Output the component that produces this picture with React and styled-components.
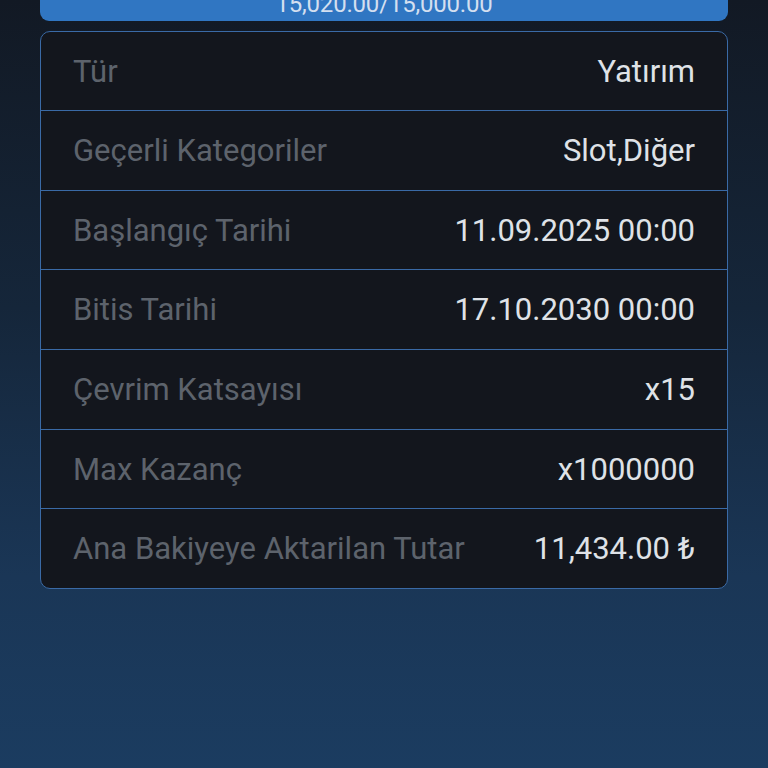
import React from "react";
import styled, { createGlobalStyle } from "styled-components";

const Global = createGlobalStyle`
  html, body { margin: 0; padding: 0; }
  body {
    width: 768px;
    height: 768px;
    overflow: hidden;
    font-family: Roboto, "Noto Sans", sans-serif;
    background: linear-gradient(180deg, #121924 0%, #15263a 40%, #1a3656 75%, #1b3c60 100%);
  }
`;

const Page = styled.div`
  width: 768px;
  height: 768px;
  box-sizing: border-box;
  padding: 0 40px;
  display: flex;
  flex-direction: column;
  gap: 10px;
`;

const Progress = styled.div`
  margin-top: -20px;
  height: 41px;
  border-radius: 0 0 9px 9px;
  background: #3076c2;
  color: #d3dff0;
  font-size: 24px;
  display: flex;
  align-items: flex-end;
  justify-content: center;
  line-height: 1;
  padding-bottom: 5px;
  box-sizing: border-box;
  letter-spacing: -0.2px;
`;

const Card = styled.div`
  border: 1px solid #3a6aa6;
  border-radius: 10px;
  background: #13161d;
  overflow: hidden;
`;

const Row = styled.div`
  height: ${(p) => (p.$first ? "78px" : "79.7px")};
  box-sizing: border-box;
  display: flex;
  align-items: center;
  justify-content: space-between;
  padding: 0 32px 0 32px;
  border-top: ${(p) => (p.$first ? "none" : "1px solid #3a6aa6")};
  font-size: 31px;
  line-height: 1;
`;

const Label = styled.span`
  color: #5d636c;
`;

const Value = styled.span`
  color: #dfe2e7;
`;

const rows = [
  ["Tür", "Yatırım"],
  ["Geçerli Kategoriler", "Slot,Diğer"],
  ["Başlangıç Tarihi", "11.09.2025 00:00"],
  ["Bitis Tarihi", "17.10.2030 00:00"],
  ["Çevrim Katsayısı", "x15"],
  ["Max Kazanç", "x1000000"],
  ["Ana Bakiyeye Aktarilan Tutar", "11,434.00 ₺"],
];

export default function App() {
  return (
    <>
      <Global />
      <Page>
        <Progress>15,020.00/15,000.00</Progress>
        <Card>
          {rows.map(([l, v], i) => (
            <Row key={l} $first={i === 0}>
              <Label>{l}</Label>
              <Value>{v}</Value>
            </Row>
          ))}
        </Card>
      </Page>
    </>
  );
}
